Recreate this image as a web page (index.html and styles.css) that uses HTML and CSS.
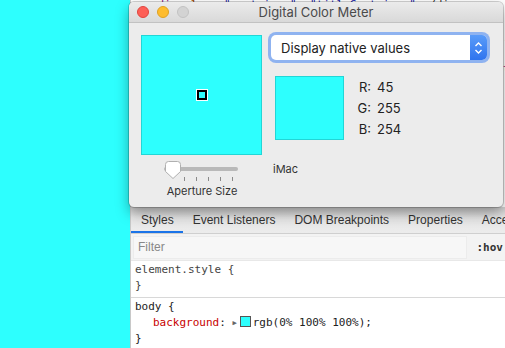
FILE: index.html
```html
<!DOCTYPE html>
<html lang="en">
<head>
    <meta charset="UTF-8">
    <title>Digital Color Meter</title>
    <link rel="stylesheet" href="styles.css">
</head>
<body>
    <div class="page"></div>

    <div class="devtools">
        <div class="dom-tree">
            <div class="dom-line"><span class="tag">&lt;div</span> <span class="attr">class</span>=<span class="val">"container"</span><span class="tag">&gt;</span> <span class="val">"titleContainer"</span> &lt;/div&gt;</div>
            <div class="dom-line deep"><span class="val">"background-color: rgb(0, 255, 255)"</span></div>
            <div class="dom-line deep"><span class="tag">&lt;script</span> <span class="attr">src</span>=<span class="val">"main.js"</span><span class="tag">&gt;&lt;/script&gt;</span></div>
            <div class="dom-line deep"><span class="tag">&lt;link</span> <span class="attr">rel</span>=<span class="val">"stylesheet"</span><span class="tag">&gt;</span></div>
            <div class="dom-line deep"><span class="val">"text/javascript"</span> <span class="tag">&lt;/div&gt;</span></div>
            <div class="dom-line deep"><span class="tag">&lt;/body&gt;</span> <span class="val">"html"</span> <span class="tag">&lt;/html&gt;</span></div>
        </div>

        <div class="tabs">
            <div class="tab active">Styles</div>
            <div class="tab">Event Listeners</div>
            <div class="tab">DOM Breakpoints</div>
            <div class="tab">Properties</div>
            <div class="tab">Accessibility</div>
        </div>

        <div class="filter-row">
            <div class="filter-input">Filter</div>
            <div class="hov">:hov</div>
        </div>

        <div class="rule">
            <div class="code grey">element.style {</div>
            <div class="code grey">}</div>
        </div>
        <div class="rule">
            <div class="code">body {</div>
            <div class="code indent"><span class="prop">background</span>: <span class="arrow">&#9654;</span><span class="chip"></span>rgb(0% 100% 100%);</div>
            <div class="code">}</div>
        </div>
    </div>

    <!-- floating window -->
    <div class="meter-window">
        <div class="titlebar">
            <div class="lights">
                <span class="light red"></span>
                <span class="light yellow"></span>
                <span class="light grey"></span>
            </div>
            <div class="title">Digital Color Meter</div>
        </div>

        <div class="meter-body">
            <div class="left-col">
                <div class="big-swatch">
                    <span class="aperture"></span>
                </div>
                <div class="slider">
                    <svg width="80" height="24" viewBox="0 0 80 24">
                        <rect x="2" y="7" width="74" height="4" rx="2" fill="#b9b9b9"/>
                        <g stroke="#8a8a8a" stroke-width="1">
                            <line x1="22.5" y1="17" x2="22.5" y2="21"/>
                            <line x1="34.5" y1="17" x2="34.5" y2="21"/>
                            <line x1="46.5" y1="17" x2="46.5" y2="21"/>
                            <line x1="58.5" y1="17" x2="58.5" y2="21"/>
                            <line x1="70.5" y1="17" x2="70.5" y2="21"/>
                        </g>
                        <path d="M3.5 4.5 Q3.5 1.5 6.5 1.5 H15.5 Q18.5 1.5 18.5 4.5 V11.5 L11 18.5 L3.5 11.5 Z" fill="#fff" stroke="#b0b0b0" stroke-width="1"/>
                    </svg>
                    <div class="slider-label">Aperture Size</div>
                </div>
            </div>

            <div class="right-col">
                <div class="dropdown">
                    <span>Display native values</span>
                    <span class="stepper">
                        <svg width="9" height="14" viewBox="0 0 9 14">
                            <path d="M1.5 5 L4.5 2 L7.5 5 M1.5 9 L4.5 12 L7.5 9" fill="none" stroke="#fff" stroke-width="1.4"/>
                        </svg>
                    </span>
                </div>

                <div class="readout">
                    <div class="small-swatch"></div>
                    <div class="values">
                        <div class="value-row"><span class="label">R:</span><span>45</span></div>
                        <div class="value-row"><span class="label">G:</span><span>255</span></div>
                        <div class="value-row"><span class="label">B:</span><span>254</span></div>
                    </div>
                </div>

                <div class="display-name">iMac</div>
            </div>
        </div>
    </div>
</body>
</html>
```

FILE: styles.css
```css
:root {
    --cyan: #2dfffe;
    --cyan-edge: #22d6d6;
    --window-bg: #ececec;
    --text: #222;
}

body {
    margin: 0;
    width: 505px;
    height: 348px;
    display: flex;
    overflow: hidden;
    font-family: Inter, "Liberation Sans", sans-serif;
    background: #fff;
}

.page {
    width: 130px;
    flex-shrink: 0;
    background-color: var(--cyan);
}

.devtools {
    flex: 1;
    display: flex;
    flex-direction: column;
    background: #fff;
    border-left: 1px solid #c8c8c8;
    min-width: 0;
    overflow: hidden;
}

.dom-tree {
    height: 218px;
    flex-shrink: 0;
    margin-top: -11px;
    padding-left: 20px;
    font-family: "DejaVu Sans Mono", monospace;
    font-size: 11px;
    line-height: 32px;
    color: #333;
    overflow: hidden;
    box-sizing: border-box;
}

.dom-line {
    white-space: nowrap;
}

.dom-line.deep {
    padding-left: 160px;
}

.tag { color: #881280; }
.attr { color: #994500; }
.val { color: #1a1aa6; }

.tabs {
    height: 27px;
    flex-shrink: 0;
    display: flex;
    align-items: stretch;
    background: linear-gradient(#d3d3d3, #e6e6e6 40%, #ececec);
    border-bottom: 1px solid #cfcfcf;
    font-family: "Liberation Sans", sans-serif;
    font-size: 12px;
    color: #333;
    box-sizing: border-box;
    white-space: nowrap;
}

.tab {
    padding: 2px 9px 0 10px;
    display: flex;
    align-items: center;
    border-bottom: 2px solid transparent;
}

.tab.active {
    border-bottom-color: #1a73e8;
}

.filter-row {
    height: 27px;
    flex-shrink: 0;
    display: flex;
    align-items: center;
    gap: 10px;
    padding: 1px 2px 0;
    background: #f3f3f3;
    border-bottom: 1px solid #e8e8e8;
    box-sizing: border-box;
    font-family: "Liberation Sans", sans-serif;
    font-size: 12px;
}

.filter-input {
    width: 332px;
    height: 21px;
    line-height: 21px;
    padding-left: 4px;
    background: #f7f7f7;
    color: #888;
    border: 1px solid #ececec;
}

.hov {
    font-family: "DejaVu Sans Mono", monospace;
    font-size: 11px;
    font-weight: bold;
    color: #333;
}

.rule {
    padding: 1px 4px 3px;
    border-bottom: 1px solid #d8d8d8;
}

.code {
    font-family: "DejaVu Sans Mono", monospace;
    font-size: 11px;
    line-height: 16px;
    color: #222;
    white-space: nowrap;
}

.code.grey {
    color: #444;
}

.indent {
    padding-left: 18px;
}

.prop {
    color: #c80000;
}

.arrow {
    font-size: 7px;
    color: #666;
    vertical-align: 1px;
    margin-right: 3px;
}

.chip {
    display: inline-block;
    width: 9px;
    height: 9px;
    background: var(--cyan);
    border: 1px solid #555;
    margin-right: 2px;
    vertical-align: -1px;
}

/* the Digital Color Meter window floats over the page */
.meter-window {
    position: absolute;
    left: 129px;
    top: 2px;
    width: 374px;
    height: 205px;
    background: var(--window-bg);
    border-radius: 5px;
    box-shadow: 0 0 0 1px rgba(0, 0, 0, 0.18), 0 6px 14px rgba(0, 0, 0, 0.35);
    overflow: hidden;
}

.titlebar {
    height: 21px;
    display: flex;
    align-items: center;
    background: linear-gradient(#ebebeb, #d9d9d9);
    border-bottom: 1px solid #c2c2c2;
    box-sizing: border-box;
}

.lights {
    display: flex;
    gap: 8px;
    padding-left: 8px;
}

.light {
    width: 12px;
    height: 12px;
    border-radius: 50%;
    box-sizing: border-box;
}

.light.red { background: #fd5f57; border: 1px solid #e0443e; }
.light.yellow { background: #febc2e; border: 1px solid #dea123; }
.light.grey { background: #d3d3d3; border: 1px solid #c2c2c2; }

.title {
    flex: 1;
    text-align: center;
    font-size: 13px;
    color: #4a4a4a;
    margin-left: -60px;
}

.meter-body {
    display: flex;
    gap: 9px;
    padding: 12px 0 0 12px;
}

.left-col {
    display: flex;
    flex-direction: column;
    align-items: center;
    width: 121px;
}

.big-swatch {
    width: 121px;
    height: 120px;
    box-sizing: border-box;
    background: var(--cyan);
    border: 1px solid var(--cyan-edge);
    display: flex;
    justify-content: center;
    align-items: center;
}

.aperture {
    width: 10px;
    height: 10px;
    box-sizing: border-box;
    border: 2px solid #000;
    outline: 1px solid #fff;
    margin-top: -1px;
}

.slider {
    display: flex;
    flex-direction: column;
    align-items: center;
    margin-top: 5px;
    margin-left: 1px;
}

.slider svg {
    display: block;
}

.slider-label {
    font-size: 11px;
    color: #333;
    margin-top: 0;
}

.right-col {
    display: flex;
    flex-direction: column;
}

.dropdown {
    width: 216px;
    height: 25px;
    box-sizing: border-box;
    display: flex;
    align-items: center;
    justify-content: space-between;
    background: #fff;
    border-radius: 5px;
    box-shadow: 0 0 0 3px #8fb3f0, 0 0 0 1px #6f9ee8;
    padding-left: 10px;
    font-size: 13px;
    color: var(--text);
    overflow: hidden;
}

.stepper {
    width: 17px;
    height: 25px;
    display: flex;
    align-items: center;
    justify-content: center;
    background: linear-gradient(#5a9cf9, #2f74ee);
}

.readout {
    display: flex;
    align-items: flex-start;
    gap: 12px;
    margin-top: 16px;
    padding-left: 4px;
}

.small-swatch {
    width: 69px;
    height: 64px;
    box-sizing: border-box;
    background: var(--cyan);
    border: 1px solid var(--cyan-edge);
}

.values {
    display: flex;
    flex-direction: column;
    gap: 5px;
    padding-top: 3px;
    font-size: 13px;
    color: var(--text);
}

.value-row {
    display: flex;
    gap: 6px;
    line-height: 16px;
}

.label {
    width: 15px;
    text-align: right;
}

.display-name {
    margin-top: 22px;
    padding-left: 2px;
    font-size: 11px;
    color: #333;
}
```
